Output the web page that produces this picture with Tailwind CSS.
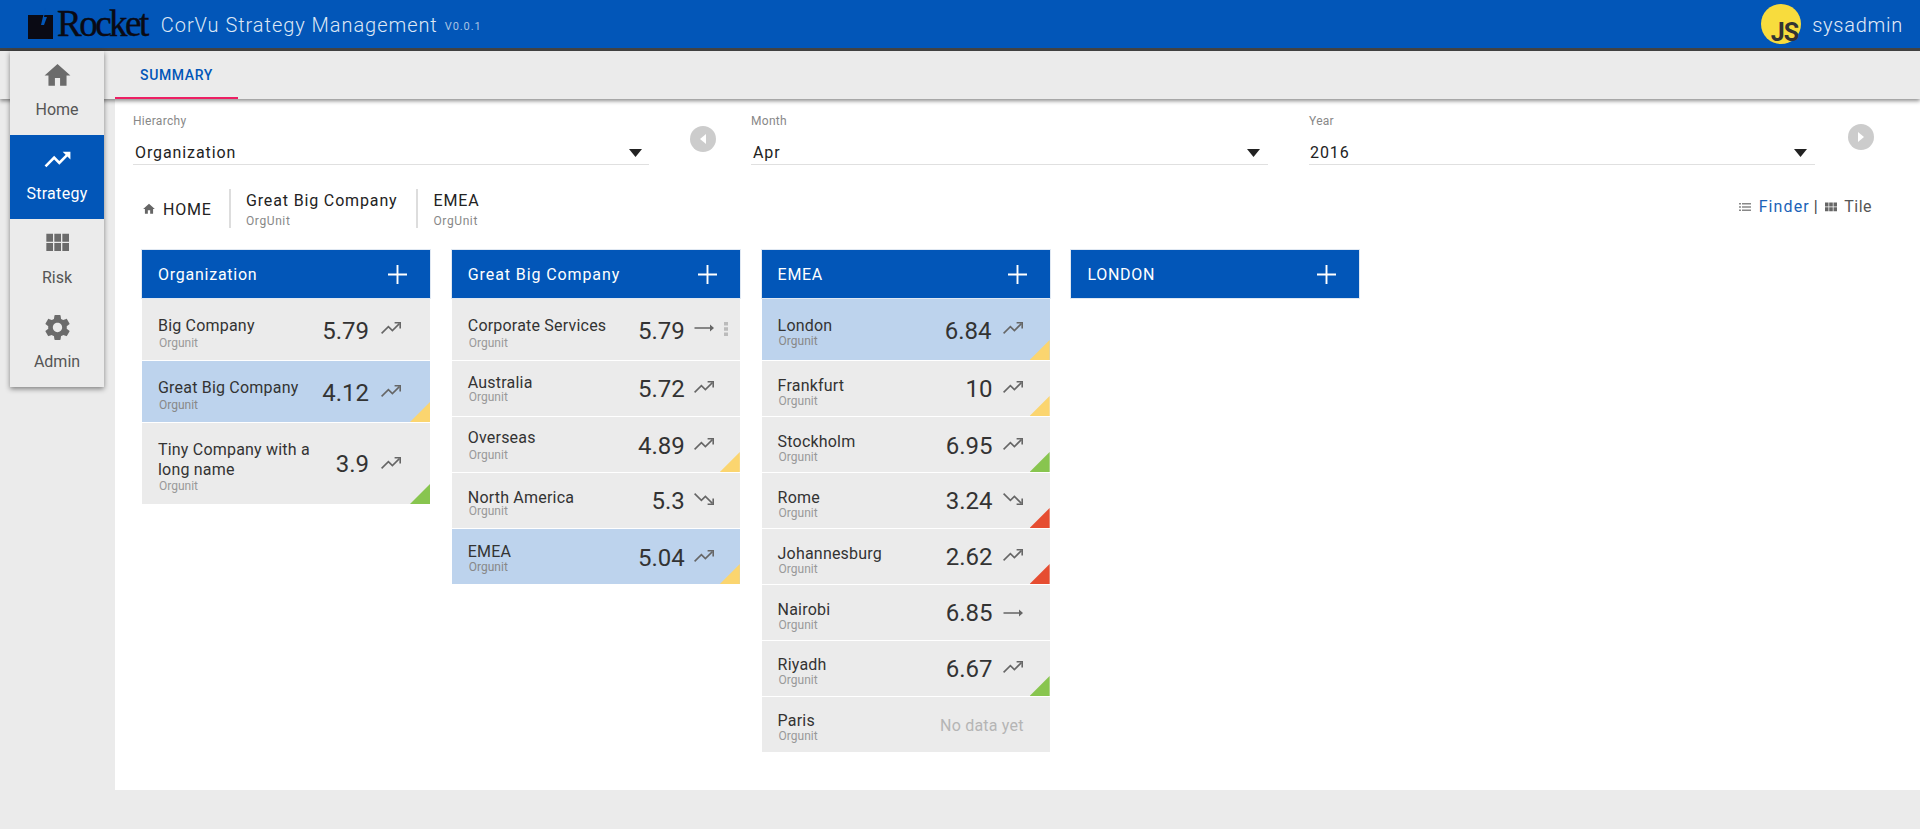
<!DOCTYPE html>
<html lang="en">
 <head>
  <meta charset="utf-8"/>
  <meta content="width=device-width, initial-scale=1.0" name="viewport"/>
  <title>CorVu Strategy Management</title>
  <script src="https://cdn.jsdelivr.net/npm/@tailwindcss/browser@4"></script>
 </head>
 <body class="relative h-[829px] overflow-hidden bg-[#ebebeb] font-['Roboto',sans-serif] text-[#333]">
  <!-- shared icons -->
  <svg class="hidden">
   <symbol id="up" viewBox="0 0 24 24"><path d="M2.6 17.4l6.8-6.8 4 4L20.4 7.6" fill="none" stroke="currentColor" stroke-width="1.6"/><path d="M15.6 6.8H21.2V12.400" fill="none" stroke="currentColor" stroke-width="1.6"/></symbol>
   <symbol id="down" viewBox="0 0 24 24"><path d="M2.6 6.6l6.8 6.8 4-4 7 7" fill="none" stroke="currentColor" stroke-width="1.6"/><path d="M15.6 17.2H21.2V11.6" fill="none" stroke="currentColor" stroke-width="1.6"/></symbol>
   <symbol id="flat" viewBox="0 0 24 24"><path d="M22 12l-4-3.4v2.6H2.5v1.6H18v2.6z" fill="currentColor"/></symbol>
   <symbol id="plus" viewBox="0 0 20 20"><path d="M9 0h2v9h9v2h-9v9H9v-9H0V9h9z" fill="currentColor"/></symbol>
   <symbol id="caret" viewBox="0 0 13 8"><path d="M0 0h13L6.5 8z" fill="currentColor"/></symbol>
  </svg>

  <!-- Top bar -->
  <header class="flex h-[51px] items-center border-b-[3px] border-[#444] bg-[#0256b8] pl-[28px] pr-[17px]">
   <svg class="mb-[2px] h-[32px] w-[26px]" viewBox="0 0 26 32"><path d="M0 8h25v24H0z" fill="#0a0a14"/><path d="M13 18L17 1l1 0-2 9h3l-3 8z" fill="#0256b8"/></svg>
   <span class="ml-[3px] font-['Liberation_Serif',serif] text-[37px] leading-[36px] tracking-[-2.5px] text-[#0a0a14] [-webkit-text-stroke:0.4px_#0a0a14]">Rocket</span>
   <span class="ml-[14px] mt-[1px] text-[20px] font-light tracking-[0.95px] text-[#dde7f5]">CorVu Strategy Management</span>
   <span class="ml-[7px] mt-[6px] text-[11px] tracking-[0.9px] text-[#a9c3e4]">V0.0.1</span>
   <div class="ml-auto flex h-[40px] w-[40px] items-end justify-end rounded-full bg-[#f8dc3d] pr-[3px] text-[25px] font-bold leading-[22px] tracking-[-1px] text-[#333]">JS</div>
   <span class="ml-[11px] mt-[1px] text-[20px] font-light tracking-[0.75px] text-[#e3ebf7]">sysadmin</span>
  </header>

  <!-- Tabs -->
  <div class="relative h-[48px] bg-[#ebebeb] pl-[115px] shadow-[0_2px_4px_rgba(0,0,0,0.45)]">
   <div class="flex h-[48px] w-[123px] items-center justify-center border-b-2 border-[#ec1f63] pt-[2px] text-[14px] font-medium tracking-[0.6px] text-[#0256b8]">SUMMARY</div>
  </div>

  <!-- Side menu, floats over the tab bar -->
  <nav class="absolute left-[10px] top-[51px] z-10 w-[94px] bg-[#ebebeb] text-[16px] text-[#555] shadow-[0_2px_5px_rgba(0,0,0,0.45)]">
   <a class="flex h-[84px] flex-col items-center pt-[9px]">
    <svg class="h-[31px] w-[31px] text-[#6b6b6b]" viewBox="0 0 24 24"><path d="M10 20v-6h4v6h5v-8h3L12 3 2 12h3v8z" fill="currentColor"/></svg>
    <span class="mt-[9px] leading-[20px]">Home</span>
   </a>
   <a class="flex h-[84px] flex-col items-center bg-[#0256b8] pt-[9px] text-white">
    <svg class="h-[31px] w-[31px]" viewBox="0 0 24 24"><path d="M16 6l2.29 2.29-4.88 4.88-4-4L2 16.59 3.41 18l6-6 4 4 6.3-6.29L22 12V6z" fill="currentColor"/></svg>
    <span class="mt-[9px] leading-[20px] tracking-[0.3px]">Strategy</span>
   </a>
   <a class="flex h-[84px] flex-col items-center pt-[8px]">
    <svg class="h-[32px] w-[32px] text-[#6b6b6b]" viewBox="0 0 24 24"><path d="M4 11h5V5H4v6zm0 7h5v-6H4v6zm6 0h5v-6h-5v6zm6 0h5v-6h-5v6zm-6-7h5V5h-5v6zm6-6v6h5V5h-5z" fill="currentColor"/></svg>
    <span class="mt-[9px] leading-[20px]">Risk</span>
   </a>
   <a class="flex h-[84px] flex-col items-center pt-[9px]">
    <svg class="h-[31px] w-[31px] text-[#6b6b6b]" viewBox="0 0 24 24"><path d="M19.14 12.94c.04-.3.06-.61.06-.94 0-.32-.02-.64-.07-.94l2.03-1.58c.18-.14.23-.41.12-.61l-1.92-3.32c-.12-.22-.37-.29-.59-.22l-2.39.96c-.5-.38-1.03-.7-1.62-.94l-.36-2.54c-.04-.24-.24-.41-.48-.41h-3.84c-.24 0-.43.17-.47.41l-.36 2.54c-.59.24-1.13.57-1.62.94l-2.39-.96c-.22-.08-.47 0-.59.22L2.74 8.87c-.12.21-.08.47.12.61l2.03 1.58c-.05.3-.09.63-.09.94s.02.64.07.94l-2.03 1.58c-.18.14-.23.41-.12.61l1.92 3.32c.12.22.37.29.59.22l2.39-.96c.5.38 1.03.7 1.62.94l.36 2.54c.05.24.24.41.48.41h3.84c.24 0 .44-.17.47-.41l.36-2.54c.59-.24 1.13-.56 1.62-.94l2.39.96c.22.08.47 0 .59-.22l1.92-3.32c.12-.22.07-.47-.12-.61l-2.01-1.58zM12 15.6c-1.98 0-3.6-1.62-3.6-3.6s1.62-3.6 3.6-3.6 3.6 1.62 3.6 3.6-1.62 3.6-3.6 3.6z" fill="currentColor"/></svg>
    <span class="mt-[9px] leading-[20px]">Admin</span>
   </a>
  </nav>

  <!-- Main content -->
  <main class="ml-[115px] h-[691px] bg-white">
   <!-- Filters -->
   <div class="flex items-start pl-[18px] pt-[15px]">
    <div class="w-[516px]">
     <div class="text-[12px] leading-[14px] tracking-[0.3px] text-[#888]">Hierarchy</div>
     <div class="mt-[13px] flex h-[24px] items-center justify-between border-b border-[#e0e0e0] pl-[2px] pr-[7px] pt-px text-[16px] tracking-[0.9px] text-[#222]">Organization<svg class="h-[8px] w-[13px] text-[#222]"><use href="#caret"/></svg></div>
    </div>
    <div class="ml-[41px] mt-[12px] flex h-[26px] w-[26px] items-center justify-center rounded-full bg-[#ccc]"><svg class="h-[10px] w-[6px]" viewBox="0 0 6 10"><path d="M6 0v10L0 5z" fill="#fff"/></svg></div>
    <div class="ml-[35px] w-[517px]">
     <div class="text-[12px] leading-[14px] tracking-[0.3px] text-[#888]">Month</div>
     <div class="mt-[13px] flex h-[24px] items-center justify-between border-b border-[#e0e0e0] pl-[2px] pr-[8px] pt-px text-[16px] tracking-[0.9px] text-[#222]">Apr<svg class="h-[8px] w-[13px] text-[#222]"><use href="#caret"/></svg></div>
    </div>
    <div class="ml-[41px] w-[506px]">
     <div class="text-[12px] leading-[14px] tracking-[0.3px] text-[#888]">Year</div>
     <div class="mt-[13px] flex h-[24px] items-center justify-between border-b border-[#e0e0e0] pl-px pr-[8px] pt-px text-[16px] tracking-[0.9px] text-[#222]">2016<svg class="h-[8px] w-[13px] text-[#222]"><use href="#caret"/></svg></div>
    </div>
    <div class="ml-[33px] mt-[10px] flex h-[26px] w-[26px] items-center justify-center rounded-full bg-[#ccc]"><svg class="h-[10px] w-[6px]" viewBox="0 0 6 10"><path d="M0 0v10L6 5z" fill="#fff"/></svg></div>
   </div>

   <!-- Breadcrumb and view switch -->
   <div class="mt-[24px] flex h-[39px] items-start pl-[27px] pr-[48px]">
    <div class="flex h-[39px] w-[87px] items-center pt-[2px] text-[16px] tracking-[0.8px] text-[#222]">
     <svg class="mr-[7px] -mt-[2px] h-[14px] w-[14px] text-[#666]" viewBox="0 0 24 24"><path d="M10 20v-6h4v6h5v-8h3L12 3 2 12h3v8z" fill="currentColor"/></svg>HOME
    </div>
    <div class="h-[39px] border-l-2 border-[#ddd] pl-[15px] pr-[18px] pt-[2px]">
     <div class="text-[16px] leading-[20px] tracking-[0.85px] text-[#222]">Great Big Company</div>
     <div class="mt-[3px] text-[12px] leading-[14px] tracking-[0.6px] text-[#888]">OrgUnit</div>
    </div>
    <div class="h-[39px] border-l-2 border-[#ddd] pl-[16px] pt-[2px]">
     <div class="text-[16px] leading-[20px] tracking-[0.85px] text-[#222]">EMEA</div>
     <div class="mt-[3px] text-[12px] leading-[14px] tracking-[0.6px] text-[#888]">OrgUnit</div>
    </div>
    <div class="ml-auto mt-[8px] flex items-center text-[16px] leading-[20px] tracking-[0.5px] text-[#555]">
     <svg class="mr-[8px] h-[12px] w-[12px] text-[#888]" viewBox="0 0 12 12"><path d="M0 2h2v1.400H0zM3 2h9v1.400H3zM0 5.300h2v1.400H0zM3 5.300h9v1.400H3zM0 8.600h2V10H0zM3 8.600h9V10H3z" fill="currentColor"/></svg>
     <span class="tracking-[1.1px] text-[#1b62b8]">Finder</span>
     <span class="ml-[4px] text-[#444]">|</span>
     <svg class="ml-[7px] mr-[7px] h-[12px] w-[12px] text-[#666]" viewBox="0 0 12 12"><path d="M0 1.500h3.500v4H0zM4.200 1.500h3.600v4H4.200zM8.500 1.500H12v4H8.500zM0 6.200h3.500v4H0zM4.200 6.200h3.600v4H4.200zM8.500 6.200H12v4H8.500z" fill="currentColor"/></svg>
     <span>Tile</span>
    </div>
   </div>

   <!-- Columns -->
   <div class="mt-[22px] flex items-start gap-[21.8px] pl-[27px]">

    <!-- Organization -->
    <section class="w-[288px]">
     <div class="flex h-[48px] items-center justify-between bg-[#0256b8] pl-[16px] pr-[23px] pt-px text-[16px] tracking-[0.75px] text-white shadow-[0_0_0_1px_#e0e8f2]">Organization<svg class="h-[19px] w-[19px]"><use href="#plus"/></svg></div>
     <div class="relative mt-px flex h-[61px] justify-between bg-[#ebebeb] pl-[16px] pr-[27px]">
      <div class="pt-[17px]"><div class="text-[16px] leading-[20px] tracking-[0.2px]">Big Company</div><div class="pl-px text-[12px] leading-[14px] text-[#999]">Orgunit</div></div>
      <div class="flex items-center self-start pt-[17px]"><span class="text-[24px] leading-[30px]">5.79</span><svg class="-mt-[6px] ml-[10px] h-[24px] w-[24px] text-[#666]"><use href="#up"/></svg></div>
     </div>
     <div class="relative mt-px flex h-[61px] justify-between bg-[#bdd3ed] pl-[16px] pr-[27px]">
      <div class="pt-[17px]"><div class="text-[16px] leading-[20px] tracking-[0.2px]">Great Big Company</div><div class="pl-px text-[12px] leading-[14px] text-[#888]">Orgunit</div></div>
      <div class="flex items-center self-start pt-[17px]"><span class="text-[24px] leading-[30px]">4.12</span><svg class="-mt-[4px] ml-[10px] h-[24px] w-[24px] text-[#666]"><use href="#up"/></svg></div>
      <i class="absolute bottom-0 right-0 h-[20px] w-[20px] bg-[#fbd56f] [clip-path:polygon(100%_0,100%_100%,0_100%)]"></i>
     </div>
     <div class="relative mt-px flex h-[81px] justify-between bg-[#ebebeb] pl-[16px] pr-[27px]">
      <div class="w-[170px] pt-[17px]"><div class="text-[16px] leading-[20px] tracking-[0.2px]">Tiny Company with a long name</div><div class="-mt-px pl-px text-[12px] leading-[14px] text-[#999]">Orgunit</div></div>
      <div class="flex items-center self-start pt-[26px]"><span class="text-[24px] leading-[30px]">3.9</span><svg class="-mt-[2px] ml-[10px] h-[24px] w-[24px] text-[#666]"><use href="#up"/></svg></div>
      <i class="absolute bottom-0 right-0 h-[20px] w-[20px] bg-[#88c54f] [clip-path:polygon(100%_0,100%_100%,0_100%)]"></i>
     </div>
    </section>

    <!-- Great Big Company -->
    <section class="w-[288px]">
     <div class="flex h-[48px] items-center justify-between bg-[#0256b8] pl-[16px] pr-[23px] pt-px text-[16px] tracking-[0.9px] text-white shadow-[0_0_0_1px_#e0e8f2]">Great Big Company<svg class="h-[19px] w-[19px]"><use href="#plus"/></svg></div>
     <div class="relative mt-px flex h-[61px] justify-between bg-[#ebebeb] pl-[16px] pr-[24px]">
      <div class="pt-[17px]"><div class="text-[16px] leading-[20px] tracking-[0.2px]">Corporate Services</div><div class="pl-px text-[12px] leading-[14px] text-[#999]">Orgunit</div></div>
      <div class="flex items-center self-start pt-[17px]"><span class="text-[24px] leading-[30px]">5.79</span><svg class="-mt-[6px] ml-[7px] h-[24px] w-[24px] text-[#666]"><use href="#flat"/></svg></div>
      <svg class="absolute right-[12px] top-[23px] h-[14px] w-[4px] text-[#bbb]" viewBox="0 0 4 14"><path d="M0 0h4v3.500H0zM0 5.200h4v3.500H0zM0 10.400h4v3.500H0z" fill="currentColor"/></svg>
     </div>
     <div class="relative mt-px flex h-[55px] justify-between bg-[#ebebeb] pl-[16px] pr-[24px]">
      <div class="pt-[12px]"><div class="text-[16px] leading-[20px] tracking-[0.2px]">Australia</div><div class="-mt-[3px] pl-px text-[12px] leading-[14px] text-[#999]">Orgunit</div></div>
      <div class="flex items-center self-start pt-[13px]"><span class="text-[24px] leading-[30px]">5.72</span><svg class="-mt-[4px] ml-[7px] h-[24px] w-[24px] text-[#666]"><use href="#up"/></svg></div>
     </div>
     <div class="relative mt-px flex h-[55px] justify-between bg-[#ebebeb] pl-[16px] pr-[24px]">
      <div class="pt-[11px]"><div class="text-[16px] leading-[20px] tracking-[0.2px]">Overseas</div><div class="pl-px text-[12px] leading-[14px] text-[#999]">Orgunit</div></div>
      <div class="flex items-center self-start pt-[14px]"><span class="text-[24px] leading-[30px]">4.89</span><svg class="-mt-[4px] ml-[7px] h-[24px] w-[24px] text-[#666]"><use href="#up"/></svg></div>
      <i class="absolute bottom-0 right-0 h-[20px] w-[20px] bg-[#fbd56f] [clip-path:polygon(100%_0,100%_100%,0_100%)]"></i>
     </div>
     <div class="relative mt-px flex h-[55px] justify-between bg-[#ebebeb] pl-[16px] pr-[24px]">
      <div class="pt-[15px]"><div class="text-[16px] leading-[20px] tracking-[0.2px]">North America</div><div class="-mt-[4px] pl-px text-[12px] leading-[14px] text-[#999]">Orgunit</div></div>
      <div class="flex items-center self-start pt-[13px]"><span class="text-[24px] leading-[30px]">5.3</span><svg class="-mt-[4px] ml-[7px] h-[24px] w-[24px] text-[#666]"><use href="#down"/></svg></div>
     </div>
     <div class="relative mt-px flex h-[55px] justify-between bg-[#bdd3ed] pl-[16px] pr-[24px]">
      <div class="pt-[13px]"><div class="text-[16px] leading-[20px] tracking-[0.2px]">EMEA</div><div class="-mt-[2px] pl-px text-[12px] leading-[14px] text-[#888]">Orgunit</div></div>
      <div class="flex items-center self-start pt-[14px]"><span class="text-[24px] leading-[30px]">5.04</span><svg class="-mt-[4px] ml-[7px] h-[24px] w-[24px] text-[#666]"><use href="#up"/></svg></div>
      <i class="absolute bottom-0 right-0 h-[20px] w-[20px] bg-[#fbd56f] [clip-path:polygon(100%_0,100%_100%,0_100%)]"></i>
     </div>
    </section>

    <!-- EMEA -->
    <section class="w-[288px]">
     <div class="flex h-[48px] items-center justify-between bg-[#0256b8] pl-[16px] pr-[23px] pt-px text-[16px] tracking-[0.7px] text-white shadow-[0_0_0_1px_#e0e8f2]">EMEA<svg class="h-[19px] w-[19px]"><use href="#plus"/></svg></div>
     <div class="relative mt-px flex h-[61px] justify-between bg-[#bdd3ed] pl-[16px] pr-[25px]">
      <div class="pt-[17px]"><div class="text-[16px] leading-[20px] tracking-[0.2px]">London</div><div class="-mt-[2px] pl-px text-[12px] leading-[14px] text-[#888]">Orgunit</div></div>
      <div class="flex items-center self-start pt-[17px]"><span class="text-[24px] leading-[30px]">6.84</span><svg class="-mt-[6px] ml-[9px] h-[24px] w-[24px] text-[#666]"><use href="#up"/></svg></div>
      <i class="absolute bottom-0 right-0 h-[20px] w-[20px] bg-[#fbd56f] [clip-path:polygon(100%_0,100%_100%,0_100%)]"></i>
     </div>
     <div class="relative mt-px flex h-[55px] justify-between bg-[#ebebeb] pl-[16px] pr-[25px]">
      <div class="pt-[15px]"><div class="text-[16px] leading-[20px] tracking-[0.2px]">Frankfurt</div><div class="-mt-[2px] pl-px text-[12px] leading-[14px] text-[#999]">Orgunit</div></div>
      <div class="flex items-center self-start pt-[13px]"><span class="text-[24px] leading-[30px]">10</span><svg class="-mt-[4px] ml-[8px] h-[24px] w-[24px] text-[#666]"><use href="#up"/></svg></div>
      <i class="absolute bottom-0 right-0 h-[20px] w-[20px] bg-[#fbd56f] [clip-path:polygon(100%_0,100%_100%,0_100%)]"></i>
     </div>
     <div class="relative mt-px flex h-[55px] justify-between bg-[#ebebeb] pl-[16px] pr-[25px]">
      <div class="pt-[15px]"><div class="text-[16px] leading-[20px] tracking-[0.2px]">Stockholm</div><div class="-mt-[2px] pl-px text-[12px] leading-[14px] text-[#999]">Orgunit</div></div>
      <div class="flex items-center self-start pt-[14px]"><span class="text-[24px] leading-[30px]">6.95</span><svg class="-mt-[4px] ml-[8px] h-[24px] w-[24px] text-[#666]"><use href="#up"/></svg></div>
      <i class="absolute bottom-0 right-0 h-[20px] w-[20px] bg-[#88c54f] [clip-path:polygon(100%_0,100%_100%,0_100%)]"></i>
     </div>
     <div class="relative mt-px flex h-[55px] justify-between bg-[#ebebeb] pl-[16px] pr-[25px]">
      <div class="pt-[15px]"><div class="text-[16px] leading-[20px] tracking-[0.2px]">Rome</div><div class="-mt-[2px] pl-px text-[12px] leading-[14px] text-[#999]">Orgunit</div></div>
      <div class="flex items-center self-start pt-[13px]"><span class="text-[24px] leading-[30px]">3.24</span><svg class="-mt-[4px] ml-[8px] h-[24px] w-[24px] text-[#666]"><use href="#down"/></svg></div>
      <i class="absolute bottom-0 right-0 h-[20px] w-[20px] bg-[#e64d31] [clip-path:polygon(100%_0,100%_100%,0_100%)]"></i>
     </div>
     <div class="relative mt-px flex h-[55px] justify-between bg-[#ebebeb] pl-[16px] pr-[25px]">
      <div class="pt-[15px]"><div class="text-[16px] leading-[20px] tracking-[0.2px]">Johannesburg</div><div class="-mt-[2px] pl-px text-[12px] leading-[14px] text-[#999]">Orgunit</div></div>
      <div class="flex items-center self-start pt-[13px]"><span class="text-[24px] leading-[30px]">2.62</span><svg class="-mt-[4px] ml-[8px] h-[24px] w-[24px] text-[#666]"><use href="#up"/></svg></div>
      <i class="absolute bottom-0 right-0 h-[20px] w-[20px] bg-[#e64d31] [clip-path:polygon(100%_0,100%_100%,0_100%)]"></i>
     </div>
     <div class="relative mt-px flex h-[55px] justify-between bg-[#ebebeb] pl-[16px] pr-[25px]">
      <div class="pt-[15px]"><div class="text-[16px] leading-[20px] tracking-[0.2px]">Nairobi</div><div class="-mt-[2px] pl-px text-[12px] leading-[14px] text-[#999]">Orgunit</div></div>
      <div class="flex items-center self-start pt-[13px]"><span class="text-[24px] leading-[30px]">6.85</span><svg class="ml-[8px] h-[24px] w-[24px] text-[#666]"><use href="#flat"/></svg></div>
     </div>
     <div class="relative mt-px flex h-[55px] justify-between bg-[#ebebeb] pl-[16px] pr-[25px]">
      <div class="pt-[14px]"><div class="text-[16px] leading-[20px] tracking-[0.2px]">Riyadh</div><div class="-mt-[2px] pl-px text-[12px] leading-[14px] text-[#999]">Orgunit</div></div>
      <div class="flex items-center self-start pt-[13px]"><span class="text-[24px] leading-[30px]">6.67</span><svg class="-mt-[4px] ml-[8px] h-[24px] w-[24px] text-[#666]"><use href="#up"/></svg></div>
      <i class="absolute bottom-0 right-0 h-[20px] w-[20px] bg-[#88c54f] [clip-path:polygon(100%_0,100%_100%,0_100%)]"></i>
     </div>
     <div class="relative mt-px flex h-[55px] justify-between bg-[#ebebeb] pl-[16px] pr-[26px]">
      <div class="pt-[14px]"><div class="text-[16px] leading-[20px] tracking-[0.2px]">Paris</div><div class="-mt-[2px] pl-px text-[12px] leading-[14px] text-[#999]">Orgunit</div></div>
      <div class="mt-[19px] self-start text-[16px] leading-[20px] tracking-[0.2px] text-[#b5b5b5]">No data yet</div>
     </div>
    </section>

    <!-- London -->
    <section class="w-[288px]">
     <div class="flex h-[48px] items-center justify-between bg-[#0256b8] pl-[16px] pr-[23px] pt-px text-[16px] tracking-[0.7px] text-white shadow-[0_0_0_1px_#e0e8f2]">LONDON<svg class="h-[19px] w-[19px]"><use href="#plus"/></svg></div>
    </section>
   </div>
  </main>
 </body>
</html>
